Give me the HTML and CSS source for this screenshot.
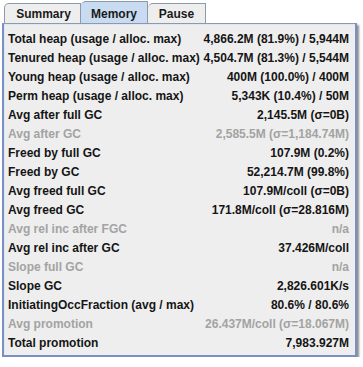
FILE: index.html
```html
<!DOCTYPE html>
<html lang="en">

<head>
    <meta charset="UTF-8">
    <meta name="viewport" content="width=device-width, initial-scale=1.0">
    <link rel="stylesheet" href="styles.css">
    <title>Memory</title>
</head>

<body>
    <div class="janela">
        <div class="abas">
            <div class="aba primeira">Summary</div>
            <div class="aba ativa">Memory</div>
            <div class="aba ultima">Pause</div>
        </div>
        <div class="painel">
            <div class="linha"><span>Total heap (usage / alloc. max)</span><span>4,866.2M (81.9%) / 5,944M</span></div>
            <div class="linha"><span>Tenured heap (usage / alloc. max)</span><span>4,504.7M (81.3%) / 5,544M</span></div>
            <div class="linha"><span>Young heap (usage / alloc. max)</span><span>400M (100.0%) / 400M</span></div>
            <div class="linha"><span>Perm heap (usage / alloc. max)</span><span>5,343K (10.4%) / 50M</span></div>
            <div class="linha"><span>Avg after full GC</span><span>2,145.5M (&sigma;=0B)</span></div>
            <div class="linha off"><span>Avg after GC</span><span>2,585.5M (&sigma;=1,184.74M)</span></div>
            <div class="linha"><span>Freed by full GC</span><span>107.9M (0.2%)</span></div>
            <div class="linha"><span>Freed by GC</span><span>52,214.7M (99.8%)</span></div>
            <div class="linha"><span>Avg freed full GC</span><span>107.9M/coll (&sigma;=0B)</span></div>
            <div class="linha"><span>Avg freed GC</span><span>171.8M/coll (&sigma;=28.816M)</span></div>
            <div class="linha off"><span>Avg rel inc after FGC</span><span>n/a</span></div>
            <div class="linha"><span>Avg rel inc after GC</span><span>37.426M/coll</span></div>
            <div class="linha off"><span>Slope full GC</span><span>n/a</span></div>
            <div class="linha"><span>Slope GC</span><span>2,826.601K/s</span></div>
            <div class="linha"><span>InitiatingOccFraction (avg / max)</span><span>80.6% / 80.6%</span></div>
            <div class="linha off"><span>Avg promotion</span><span>26.437M/coll (&sigma;=18.067M)</span></div>
            <div class="linha"><span>Total promotion</span><span>7,983.927M</span></div>
        </div>
    </div>
</body>

</html>
```

FILE: styles.css
```css
* {
    margin: 0;
    padding: 0;
    box-sizing: border-box;
}

body {
    background: #ffffff;
    font-family: 'Liberation Sans', Arial, sans-serif;
    font-size: 12px;
    font-weight: bold;
    color: #151515;
}

.janela {
    width: 358px;
    padding: 1px 0 0 2px;
}

.abas {
    display: flex;
    padding-left: 2px;
    height: 22px;
    align-items: flex-end;
}

.aba {
    height: 20px;
    padding-top: 3px;
    text-align: center;
    background: #eeeeee;
    border: 1px solid #8d9aae;
    border-bottom: none;
    border-left: none;
    color: #1a1a1a;
    border-top-left-radius: 5px 5px;
}

.aba.primeira {
    border-left: 1px solid #8d9aae;
    width: 77px;
    padding-left: 2px;
}

.aba.ativa {
    height: 22px;
    padding-top: 5px;
    background: #c8dbf0;
    width: 67px;
}

.aba.ultima {
    width: 58px;
}

.painel {
    width: 355px;
    height: 334px;
    background: #eeeeee;
    border: 2px solid #7b8fc4;
    border-top: 1px solid #8d9aae;
    box-shadow: 2px 2px 2px rgba(0, 0, 0, 0.45), inset 1px 1px 0 #dfe7f3;
    padding: 6px 6px 0 4px;
}

.linha {
    display: flex;
    justify-content: space-between;
    height: 19px;
    line-height: 19px;
}

.off {
    color: #a3a3a3;
}
```
